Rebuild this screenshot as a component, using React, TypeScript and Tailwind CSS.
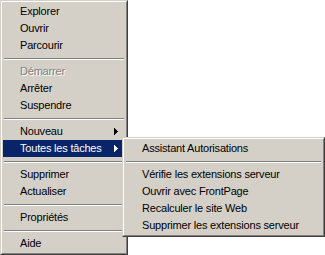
const font = { fontFamily: '"Liberation Sans", Arial, sans-serif' };

type Entry = { label: string; disabled?: boolean; sub?: boolean; active?: boolean } | "sep";

const mainItems: Entry[] = [
  { label: "Explorer" },
  { label: "Ouvrir" },
  { label: "Parcourir" },
  "sep",
  { label: "Démarrer", disabled: true },
  { label: "Arrêter" },
  { label: "Suspendre" },
  "sep",
  { label: "Nouveau", sub: true },
  { label: "Toutes les tâches", sub: true, active: true },
  "sep",
  { label: "Supprimer" },
  { label: "Actualiser" },
  "sep",
  { label: "Propriétés" },
  "sep",
  { label: "Aide" },
];

const subItems: Entry[] = [
  { label: "Assistant Autorisations" },
  "sep",
  { label: "Vérifie les extensions serveur" },
  { label: "Ouvrir avec FrontPage" },
  { label: "Recalculer le site Web" },
  { label: "Supprimer les extensions serveur" },
];

function Arrow({ white }: { white?: boolean }) {
  return (
    <svg width="4" height="7" viewBox="0 0 4 7" className="absolute right-[7px] top-[5px]">
      <path d="M0 0h1v7H0zM1 1h1v5H1zM2 2h1v3H2zM3 3h1v1H3z" fill={white ? "#ffffff" : "#000000"} />
    </svg>
  );
}

function MenuList({ items }: { items: Entry[] }) {
  return (
    <>
      {items.map((it, i) =>
        it === "sep" ? (
          <div key={i} className="h-[9px] pt-[4px] px-px">
            <div className="h-px bg-[#808080]" />
            <div className="h-px bg-white" />
          </div>
        ) : (
          <div
            key={i}
            className={`relative h-[17px] pl-[17px] text-[11px] leading-[17px] tracking-[-0.2px] whitespace-nowrap ${
              it.active ? "bg-[#0a246a] text-white" : it.disabled ? "text-[#808080]" : "text-black"
            }`}
            style={it.disabled ? { textShadow: "1px 1px 0 #ffffff" } : undefined}
          >
            {it.label}
            {it.sub && <Arrow white={it.active} />}
          </div>
        )
      )}
    </>
  );
}

function Frame({ width, children }: { width: string; children: React.ReactNode }) {
  return (
    <div className={`${width} border border-t-[#d4d0c8] border-l-[#d4d0c8] border-r-[#404040] border-b-[#404040] bg-[#d4d0c8]`}>
      <div className="border border-t-white border-l-white border-r-[#808080] border-b-[#808080] p-px">
        {children}
      </div>
    </div>
  );
}

export default function App() {
  return (
    <div className="relative w-[325px] h-[255px] bg-white overflow-hidden" style={font}>
      <Frame width="w-[128px]">
        <MenuList items={mainItems} />
      </Frame>
      <div className="absolute left-[122px] top-[137px]">
        <Frame width="w-[203px]">
          <MenuList items={subItems} />
        </Frame>
      </div>
    </div>
  );
}
